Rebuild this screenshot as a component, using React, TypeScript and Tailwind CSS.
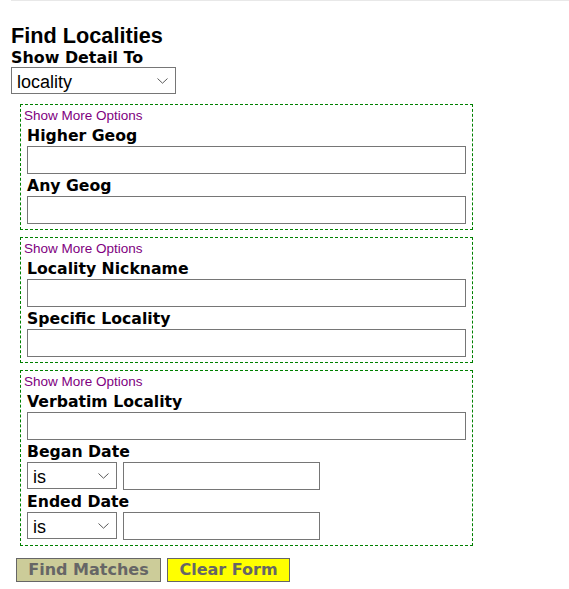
import React from "react";

const font = { fontFamily: '"Liberation Sans", Arial, sans-serif' };
const boldFont = { fontFamily: '"DejaVu Sans", Verdana, sans-serif' };

function Chevron() {
  return (
    <svg
      className="pointer-events-none absolute"
      width="11"
      height="6"
      viewBox="0 0 11 6"
      fill="none"
    >
      <path d="M0.5 0.5 L5.5 5.2 L10.5 0.5" stroke="#5a5a5a" strokeWidth="1" />
    </svg>
  );
}

function Select({ value, width, chevronLeft }: { value: string; width: string; chevronLeft: string }) {
  return (
    <div className={`relative ${width}`}>
      <select
        defaultValue={value}
        className="block h-[27px] w-full appearance-none rounded-none border border-[#767676] bg-white pl-[5px] pt-[2px] text-[18px] leading-[20px] text-black outline-none"
        style={font}
      >
        <option value={value}>{value}</option>
      </select>
      <div className={`pointer-events-none absolute top-[11px] ${chevronLeft}`}>
        <Chevron />
      </div>
    </div>
  );
}

function Label({ children }: { children: React.ReactNode }) {
  return (
    <div className="h-[22px] pt-px text-[15.7px] font-bold leading-[22px] text-black" style={boldFont}>
      {children}
    </div>
  );
}

function TextInput({ className }: { className: string }) {
  return (
    <input
      type="text"
      className={`block h-[28px] rounded-none border border-[#767676] bg-white outline-none ${className}`}
    />
  );
}

function Fieldset({ children, className }: { children: React.ReactNode; className?: string }) {
  return (
    <div
      className={`ml-[20px] w-[453px] border border-dashed border-[#008000] pb-[5px] pl-[3px] pt-[3px] ${className ?? ""}`}
    >
      <div className="h-[16px] text-[13.5px] leading-[16px] text-[#800080]">Show More Options</div>
      <div className="pl-[3px]">{children}</div>
    </div>
  );
}

export default function App() {
  return (
    <div className="min-h-screen bg-white text-black" style={font}>
      <div className="ml-[11px] h-px bg-[#e8e8e8]" />
      <div className="pl-[11px]">
        <h1 className="mt-[23px] h-[24px] text-[21.7px] font-bold leading-[24px]">Find Localities</h1>
        <div className="h-[19px] pt-px text-[15.9px] font-bold leading-[18px]" style={boldFont}>
          Show Detail To
        </div>
        <Select value="locality" width="w-[165px]" chevronLeft="left-[146px]" />
      </div>

      <Fieldset className="mt-[10px]">
        <Label>Higher Geog</Label>
        <TextInput className="w-[439px]" />
        <Label>Any Geog</Label>
        <TextInput className="w-[439px]" />
      </Fieldset>

      <Fieldset className="mt-[7px]">
        <Label>Locality Nickname</Label>
        <TextInput className="w-[439px]" />
        <Label>Specific Locality</Label>
        <TextInput className="w-[439px]" />
      </Fieldset>

      <Fieldset className="mt-[7px]">
        <Label>Verbatim Locality</Label>
        <TextInput className="w-[439px]" />
        <Label>Began Date</Label>
        <div className="flex items-start gap-[6px]">
          <Select value="is" width="w-[90px]" chevronLeft="left-[71px]" />
          <TextInput className="w-[197px]" />
        </div>
        <Label>Ended Date</Label>
        <div className="flex items-start gap-[6px]">
          <Select value="is" width="w-[90px]" chevronLeft="left-[71px]" />
          <TextInput className="w-[197px]" />
        </div>
      </Fieldset>

      <div className="ml-[16px] mt-[12px] flex gap-[6px]" style={boldFont}>
        <button
          type="button"
          className="h-[24px] w-[145px] border border-[#666666] bg-[#cccc99] text-center text-[16px] font-bold leading-[22px] text-[#666666]"
        >
          Find Matches
        </button>
        <button
          type="button"
          className="h-[24px] w-[123px] border border-[#666666] bg-[#ffff00] text-center text-[16px] font-bold leading-[22px] text-[#666666]"
        >
          Clear Form
        </button>
      </div>
    </div>
  );
}
